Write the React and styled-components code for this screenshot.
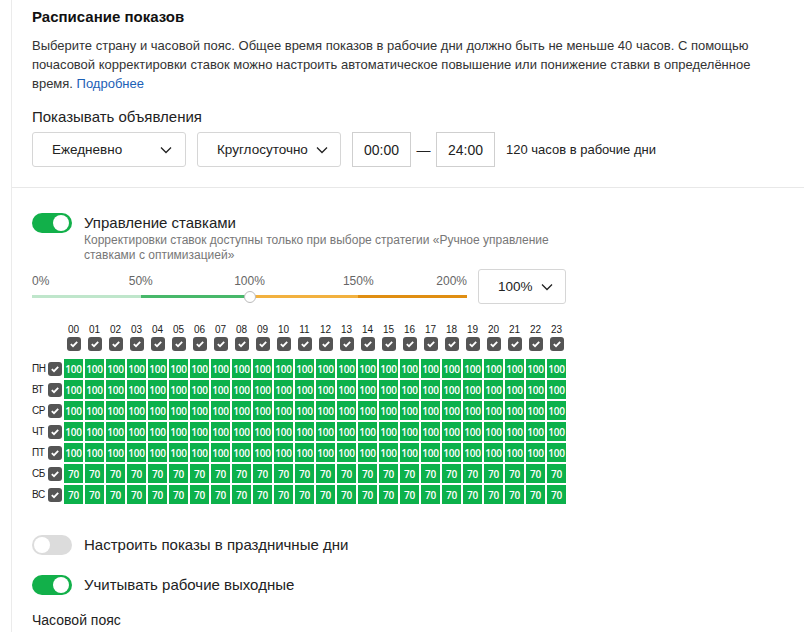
import React from "react";
import styled, { createGlobalStyle } from "styled-components";

const GlobalStyle = createGlobalStyle`
  body {
    margin: 0;
    background: #fff;
    font-family: "Liberation Sans", Arial, sans-serif;
    color: #222;
  }
`;

const HOURS = [...Array(24).keys()].map((h) => String(h).padStart(2, "0"));
const DAYS = [
  { name: "ПН", value: 100 },
  { name: "ВТ", value: 100 },
  { name: "СР", value: 100 },
  { name: "ЧТ", value: 100 },
  { name: "ПТ", value: 100 },
  { name: "СБ", value: 70 },
  { name: "ВС", value: 70 },
];

function Chevron() {
  return (
    <ChevronIcon width="12" height="8" viewBox="0 0 12 8">
      <polyline points="1,1.5 6,6.5 11,1.5" fill="none" stroke="#222" strokeWidth="1.3" />
    </ChevronIcon>
  );
}

function Check() {
  return (
    <CheckBox>
      <svg width="10" height="10" viewBox="0 0 10 10">
        <polyline points="1.8,5.2 4,7.2 8.2,2.8" fill="none" stroke="#fff" strokeWidth="1.8" />
      </svg>
    </CheckBox>
  );
}

function App() {
  return (
    <Page>
      <GlobalStyle />
      <Panel>
        <Section>
          <Title>Расписание показов</Title>
          <Description>
            Выберите страну и часовой пояс. Общее время показов в рабочие дни должно быть не меньше
            40 часов. С помощью почасовой корректировки ставок можно настроить автоматическое
            повышение или понижение ставки в определённое время. <Link href="#">Подробнее</Link>
          </Description>
          <FieldLabel>Показывать объявления</FieldLabel>
          <Controls>
            <Select $width={154}>
              <span>Ежедневно</span>
              <Chevron />
            </Select>
            <Select $width={144}>
              <span>Круглосуточно</span>
              <Chevron />
            </Select>
            <TimeBox>00:00</TimeBox>
            <Dash>—</Dash>
            <TimeBox>24:00</TimeBox>
            <HoursNote>120 часов в рабочие дни</HoursNote>
          </Controls>
        </Section>

        <Section $top={25}>
          <ToggleRow>
            <Toggle $on />
            <div>
              <ToggleLabel>Управление ставками</ToggleLabel>
              <Hint>
                Корректировки ставок доступны только при выборе стратегии «Ручное управление
                ставками с оптимизацией»
              </Hint>
            </div>
          </ToggleRow>

          <SliderRow>
            <Slider>
              <Scale>
                <ScaleMark $at={0}>0%</ScaleMark>
                <ScaleMark $at={25}>50%</ScaleMark>
                <ScaleMark $at={50}>100%</ScaleMark>
                <ScaleMark $at={75}>150%</ScaleMark>
                <ScaleMark $at={100}>200%</ScaleMark>
              </Scale>
              <Track>
                <Segment $color="#bfe6cb" />
                <Segment $color="#47b86a" />
                <Segment $color="#f2b13f" />
                <Segment $color="#e08e12" />
                <Thumb />
              </Track>
            </Slider>
            <Select $width={88}>
              <span>100%</span>
              <Chevron />
            </Select>
          </SliderRow>

          <Grid>
            <span />
            <span />
            {HOURS.map((h) => (
              <HourLabel key={h}>{h}</HourLabel>
            ))}
            <span />
            <span />
            {HOURS.map((h) => (
              <HeadCheck key={h}>
                <Check />
              </HeadCheck>
            ))}
            {DAYS.map((d) => (
              <React.Fragment key={d.name}>
                <DayLabel>{d.name}</DayLabel>
                <Check />
                {HOURS.map((h) => (
                  <Cell key={h}>{d.value}</Cell>
                ))}
              </React.Fragment>
            ))}
          </Grid>

          <ToggleRow $top={31}>
            <Toggle />
            <ToggleLabel>Настроить показы в праздничные дни</ToggleLabel>
          </ToggleRow>
          <ToggleRow $top={20}>
            <Toggle $on />
            <ToggleLabel>Учитывать рабочие выходные</ToggleLabel>
          </ToggleRow>
          <SubTitle>Часовой пояс</SubTitle>
        </Section>
      </Panel>
    </Page>
  );
}

export default App;

const Page = styled.div`
  padding-left: 11px;
  height: 632px;
  overflow: hidden;
`;

const Panel = styled.div`
  border-left: 1px solid #ebebeb;
  min-height: 632px;
`;

const Section = styled.div`
  padding: ${(p) => p.$top || 7}px 20px 20px 20px;
  & + & {
    border-top: 1px solid #e8e8e8;
  }
`;

const Title = styled.div`
  font-size: 15px;
  font-weight: bold;
  line-height: 20px;
  color: #111;
`;

const Description = styled.p`
  margin: 9px 0 0;
  font-size: 13px;
  line-height: 19px;
  color: #333;
  max-width: 750px;
`;

const Link = styled.a`
  color: #1c60b6;
  text-decoration: none;
`;

const FieldLabel = styled.div`
  margin-top: 14px;
  font-size: 15px;
  line-height: 20px;
  color: #222;
`;

const Controls = styled.div`
  margin-top: 5px;
  display: flex;
  align-items: center;
`;

const ChevronIcon = styled.svg`
  flex: none;
`;

const Select = styled.div`
  box-sizing: border-box;
  flex: none;
  height: 35px;
  width: ${(p) => (p.$width ? `${p.$width}px` : "auto")};
  padding: 0 13px 0 19px;
  margin-right: 11px;
  display: flex;
  align-items: center;
  justify-content: space-between;
  gap: 8px;
  border: 1px solid #d6d6d6;
  border-radius: 3px;
  font-size: 13.5px;
  color: #222;
  white-space: nowrap;
  &:last-child {
    margin-right: 0;
  }
`;

const TimeBox = styled.div`
  box-sizing: border-box;
  width: 59px;
  height: 35px;
  display: flex;
  align-items: center;
  justify-content: center;
  border: 1px solid #cfcfcf;
  font-size: 14px;
`;

const Dash = styled.span`
  width: 25px;
  text-align: center;
  font-size: 14px;
`;

const HoursNote = styled.span`
  margin-left: 11px;
  font-size: 13px;
  color: #222;
`;

const ToggleRow = styled.div`
  margin-top: ${(p) => p.$top || 0}px;
  display: flex;
  align-items: flex-start;
  gap: 12px;
`;

const Toggle = styled.div`
  position: relative;
  flex: none;
  width: 40px;
  height: 20px;
  border-radius: 10px;
  background: ${(p) => (p.$on ? "#12b04a" : "#dcdcdc")};
  &::after {
    content: "";
    position: absolute;
    top: 2px;
    left: ${(p) => (p.$on ? "21px" : "2px")};
    width: 16px;
    height: 16px;
    border-radius: 50%;
    background: #fff;
  }
`;

const ToggleLabel = styled.div`
  font-size: 15px;
  line-height: 20px;
  color: #222;
`;

const Hint = styled.div`
  font-size: 12px;
  line-height: 15px;
  color: #777;
  max-width: 490px;
`;

const SliderRow = styled.div`
  margin-top: 6px;
  display: flex;
  align-items: flex-start;
`;

const Slider = styled.div`
  width: 435px;
  margin-right: 11px;
  padding-top: 5px;
`;

const Scale = styled.div`
  position: relative;
  height: 15px;
`;

const ScaleMark = styled.span`
  position: absolute;
  top: 0;
  left: ${(p) => p.$at}%;
  transform: translateX(
    ${(p) => (p.$at === 0 ? "0" : p.$at === 100 ? "-100%" : "-50%")}
  );
  font-size: 12px;
  line-height: 15px;
  color: #666;
`;

const Track = styled.div`
  position: relative;
  margin-top: 6px;
  height: 3px;
  display: flex;
`;

const Segment = styled.div`
  flex: 1;
  background: ${(p) => p.$color};
`;

const Thumb = styled.div`
  position: absolute;
  left: 50%;
  top: 50%;
  width: 10px;
  height: 10px;
  margin: -6px 0 0 -6px;
  border-radius: 50%;
  background: #fff;
  border: 1px solid #bbb;
`;

const Grid = styled.div`
  margin-top: 20px;
  display: grid;
  grid-template-columns: 14px 14px repeat(24, 19px);
  grid-template-rows: 11px 20px repeat(7, 19px);
  gap: 2px;
  align-items: center;
`;

const HourLabel = styled.span`
  font-size: 10px;
  line-height: 11px;
  text-align: center;
  color: #222;
`;

const HeadCheck = styled.div`
  align-self: start;
  display: flex;
  justify-content: center;
`;

const CheckBox = styled.div`
  width: 14px;
  height: 14px;
  border-radius: 3px;
  background: #555;
  display: flex;
  align-items: center;
  justify-content: center;
`;

const DayLabel = styled.span`
  font-size: 10px;
  letter-spacing: -0.4px;
  color: #222;
  white-space: nowrap;
`;

const Cell = styled.div`
  height: 19px;
  background: #0cb14b;
  color: #fff;
  font-family: "Open Sans", "Liberation Sans", sans-serif;
  font-size: 10px;
  font-weight: 600;
  letter-spacing: -0.2px;
  display: flex;
  align-items: center;
  justify-content: center;
`;

const SubTitle = styled.div`
  margin-top: 16px;
  font-size: 14px;
  line-height: 18px;
  color: #222;
`;
